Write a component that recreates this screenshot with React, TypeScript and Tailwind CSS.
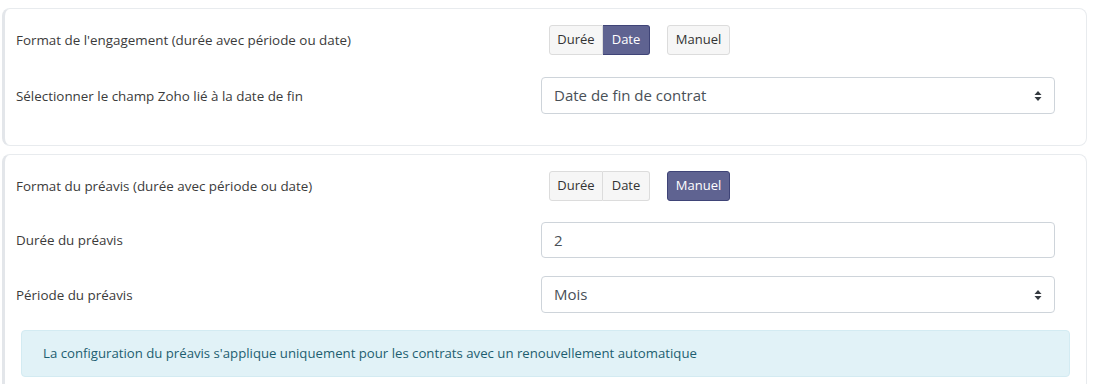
import React from "react";

const font = { fontFamily: "'Open Sans', 'Noto Sans', sans-serif" };

function Arrows() {
  return (
    <svg width="8" height="12" viewBox="0 0 8 12" className="text-[#343a40]">
      <path d="M4 1 L7.5 5 H0.5 Z" fill="currentColor" />
      <path d="M4 11 L7.5 7 H0.5 Z" fill="currentColor" />
    </svg>
  );
}

function Toggle({ active }: { active: "duree" | "date" | "manuel" }) {
  const on = "bg-[#5f6391] border-[#3f4477] text-white";
  const off = "bg-[#f6f6f6] border-[#dcdcdc] text-[#333]";
  return (
    <div className="flex items-center pl-2 gap-[17px]">
      <div className="flex h-[30px]">
        <button
          className={`h-full w-[54px] border rounded-l-[3px] text-[13px] ${active === "duree" ? on : off}`}
        >
          Durée
        </button>
        <button
          className={`h-full w-[47px] border border-l-0 rounded-r-[3px] text-[13px] ${active === "date" ? on : off}`}
        >
          Date
        </button>
      </div>
      <button
        className={`h-[30px] w-[63px] border rounded-[3px] text-[13px] ${active === "manuel" ? on : off}`}
      >
        Manuel
      </button>
    </div>
  );
}

function Field({ children, tall }: { children: React.ReactNode; tall?: boolean }) {
  return (
    <div
      className={`${tall ? "h-[37px]" : "h-[36px]"} w-[514px] border border-[#ced4da] rounded-[4px] bg-white flex items-center justify-between pl-3 pr-3 text-[15px] text-[#495057]`}
    >
      {children}
    </div>
  );
}

function Row({ label, children }: { label: string; children: React.ReactNode }) {
  return (
    <div className="flex items-center">
      <div className="w-[536px] pl-[11px] text-[13.4px] leading-5 text-[#3b3b3b]">{label}</div>
      <div>{children}</div>
    </div>
  );
}

export default function App() {
  return (
    <div className="bg-white w-[1094px] h-[384px] overflow-hidden pt-2 pl-[2px] pr-[7px]" style={font}>
      <div className="border border-[#e8ebee] border-l-[3px] border-l-[#e3e6ea] rounded-lg pt-[16px] pb-[31px] flex flex-col gap-[22px]">
        <Row label="Format de l'engagement (durée avec période ou date)">
          <Toggle active="date" />
        </Row>
        <Row label="Sélectionner le champ Zoho lié à la date de fin">
          <Field tall>
            <span>Date de fin de contrat</span>
            <Arrows />
          </Field>
        </Row>
      </div>
      <div className="mt-2 border border-[#e8ebee] border-l-[3px] border-l-[#e3e6ea] rounded-lg pt-[16px] pb-6 flex flex-col">
        <Row label="Format du préavis (durée avec période ou date)">
          <Toggle active="manuel" />
        </Row>
        <div className="mt-[21px]">
          <Row label="Durée du préavis">
            <Field>
              <span>2</span>
            </Field>
          </Row>
        </div>
        <div className="mt-[18px]">
          <Row label="Période du préavis">
            <Field tall>
              <span>Mois</span>
              <Arrows />
            </Field>
          </Row>
        </div>
        <div className="mt-[17px] mx-4 h-[47px] border border-[#d3ebf2] bg-[#e1f2f7] rounded-[4px] flex items-center pl-[21px] text-[13.2px] text-[#1d5e70]">
          La configuration du préavis s'applique uniquement pour les contrats avec un renouvellement automatique
        </div>
      </div>
    </div>
  );
}
